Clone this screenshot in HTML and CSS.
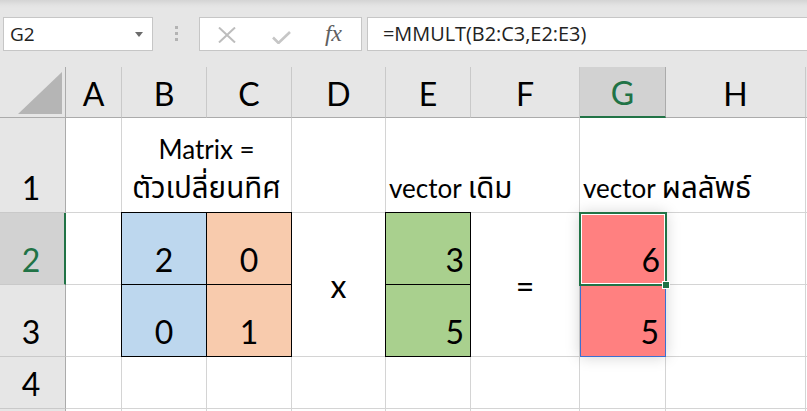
FILE: index.html
```html
<!DOCTYPE html>
<html lang="th">
<head>
<meta charset="utf-8">
<link rel="stylesheet" href="styles.css">
</head>
<body>
<div class="app">
  <div class="toolbar">
    <div class="namebox">
      <span class="name">G2</span>
      <svg class="dd" width="8" height="5" viewBox="0 0 8 5"><path d="M0 0H8L4 5Z" fill="#6b6b6b"/></svg>
    </div>
    <div class="sep"><i></i><i></i><i></i></div>
    <div class="fnbox">
      <svg class="ico-x" width="18" height="16" viewBox="0 0 18 16"><path d="M1 0.5L17 15.5M17 0.5L1 15.5" stroke="#bdbdbd" stroke-width="2" fill="none"/></svg>
      <svg class="ico-ok" width="19" height="13" viewBox="0 0 19 13"><path d="M1 6.5L6.5 12L18 1" stroke="#c6c6c6" stroke-width="2.6" fill="none"/></svg>
      <span class="fx">fx</span>
    </div>
    <div class="formula">=MMULT(B2:C3,E2:E3)</div>
  </div>

  <div class="sheet">
    <!-- header row -->
    <div class="corner"><svg width="44" height="42" viewBox="0 0 44 42"><path d="M44 0V42H0Z" fill="#b5b5b5"/></svg></div>
    <div class="ch">A</div>
    <div class="ch">B</div>
    <div class="ch">C</div>
    <div class="ch">D</div>
    <div class="ch">E</div>
    <div class="ch">F</div>
    <div class="ch ch-sel">G</div>
    <div class="ch">H</div>
    <div class="ch ch-x"></div>

    <!-- row 1 -->
    <div class="rh">1</div>
    <div class="c"></div>
    <div class="c span2 title-cell"><span class="title">Matrix =<br><span class="th">ตัวเปลี่ยนทิศ</span></span></div>
    <div class="c"></div>
    <div class="c span2 label-cell"><span>vector <span class="th">เดิม</span></span></div>
    <div class="c span2 label-cell"><span>vector <span class="th">ผลลัพธ์</span></span></div>
    <div class="c cx"></div>

    <!-- row 2 -->
    <div class="rh rh-sel">2</div>
    <div class="c"></div>
    <div class="c num center blk blue">2</div>
    <div class="c num center blk orange">0</div>
    <div class="c rspan2 op">x</div>
    <div class="c num right blk green">3</div>
    <div class="c rspan2 op">=</div>
    <div class="gblock">
      <div class="g2 num right">6<div class="sel"></div><div class="handle"></div></div>
      <div class="g3 num right">5</div>
    </div>
    <div class="c"></div>
    <div class="c cx"></div>

    <!-- row 3 -->
    <div class="rh">3</div>
    <div class="c"></div>
    <div class="c num center blk blue">0</div>
    <div class="c num center blk orange">1</div>
    <div class="c num right blk green">5</div>
    <div class="c"></div>
    <div class="c cx"></div>

    <!-- row 4 -->
    <div class="rh">4</div>
    <div class="c"></div>
    <div class="c"></div>
    <div class="c"></div>
    <div class="c"></div>
    <div class="c"></div>
    <div class="c"></div>
    <div class="c"></div>
    <div class="c"></div>
    <div class="c cx"></div>

    <!-- row 5 -->
    <div class="rh"></div>
    <div class="c"></div>
    <div class="c"></div>
    <div class="c"></div>
    <div class="c"></div>
    <div class="c"></div>
    <div class="c"></div>
    <div class="c"></div>
    <div class="c"></div>
    <div class="c cx"></div>
  </div>
</div>
</body>
</html>
```

FILE: styles.css
```css
* { box-sizing: border-box; }
html, body { margin: 0; padding: 0; }
body {
  width: 807px;
  height: 411px;
  overflow: hidden;
  background: #fff;
  font-family: "Lato", "Noto Sans Thai", "Noto Sans Thai UI", "Leelawadee UI", "Loma", "Garuda", sans-serif;
  color: #000;
}
.app { width: 807px; height: 411px; overflow: hidden; }

/* ---------- toolbar ---------- */
.toolbar {
  height: 67px;
  background: linear-gradient(#d4d4d4 0px, #e2e2e2 5px, #e6e6e6 8px, #e6e6e6 100%);
  display: flex;
  align-items: flex-start;
  padding-top: 17px;
  padding-left: 3px;
}
.namebox {
  width: 150px;
  height: 34px;
  background: #fff;
  border: 1px solid #c6c6c6;
  display: flex;
  align-items: center;
  justify-content: space-between;
  padding: 0 9px 1px 6px;
  font-family: "Open Sans", sans-serif;
  font-size: 19px;
  color: #222;
}
.dd { margin-top: 1px; }
.sep {
  width: 46px;
  height: 34px;
  display: flex;
  flex-direction: column;
  align-items: center;
  justify-content: center;
  gap: 3px;
  padding-bottom: 2px;
}
.sep i {
  display: block;
  width: 3px;
  height: 3px;
  background: #b3b3b3;
}
.fnbox {
  width: 163px;
  height: 34px;
  background: #fff;
  border: 1px solid #c6c6c6;
  display: flex;
  align-items: center;
  padding-left: 18px;
}
.ico-x { margin-top: 2px; }
.ico-ok { margin-left: 36px; margin-top: 7px; }
.fx {
  margin-left: 34px;
  font-family: "Liberation Serif", serif;
  font-style: italic;
  font-size: 24px;
  color: #606060;
  margin-top: -2px;
  letter-spacing: -0.5px;
}
.formula {
  flex: 1;
  height: 34px;
  margin-left: 5px;
  margin-right: -2px;
  background: #fff;
  border: 1px solid #c6c6c6;
  display: flex;
  align-items: center;
  padding-left: 15px;
  padding-bottom: 1px;
  font-family: "Open Sans", sans-serif;
  font-size: 19.9px;
  color: #222;
}

/* ---------- sheet ---------- */
.sheet {
  display: grid;
  grid-template-columns: 66px 56px 85px 85px 94px 85px 109px 86px 140px 1fr;
  grid-template-rows: 51px 95px 72px 72px 52px 10px;
}
.corner {
  background: #e6e6e6;
  border-right: 1px solid #ababab;
  border-bottom: 1px solid #ababab;
  display: flex;
  justify-content: flex-end;
  align-items: flex-end;
  padding: 0 3px 3px 0;
}
.ch {
  background: #e6e6e6;
  border-right: 1px solid #c9c9c9;
  border-bottom: 1px solid #ababab;
  display: flex;
  align-items: center;
  justify-content: center;
  font-size: 32px;
  line-height: 32px;
  padding-top: 3px;
}
.ch-x { border-right: none; }
.ch-sel {
  background: #d2d2d2;
  color: #217346;
  border-bottom: 2px solid #217346;
  border-right-color: #ababab;
}
.rh {
  background: #e6e6e6;
  border-right: 1px solid #ababab;
  border-bottom: 1px solid #c9c9c9;
  display: flex;
  align-items: flex-end;
  justify-content: center;
  font-size: 32px;
  line-height: 32px;
  padding-bottom: 8px;
  padding-right: 3px;
}
.rh-sel {
  background: #d2d2d2;
  color: #217346;
  border-right: 2px solid #217346;
  padding-right: 2px;
}
.c {
  border-right: 1px solid #d4d4d4;
  border-bottom: 1px solid #d4d4d4;
  display: flex;
  align-items: flex-end;
}
.cx { border-right: none; }
.span2 { grid-column: span 2; }
.rspan2 { grid-row: span 2; }

.title-cell {
  justify-content: center;
  text-align: center;
  padding-bottom: 5px;
  border-bottom-color: #000;
}
.title {
  font-size: 26px;
  line-height: 38px;
}
.th {
  font-size: 29.5px;
  line-height: 38px;
}
.label-cell {
  font-size: 26px;
  line-height: 38px;
  padding-left: 3px;
  padding-bottom: 5px;
  white-space: nowrap;
}

.num {
  font-size: 32px;
  line-height: 32px;
  padding-bottom: 8px;
}
.center { justify-content: center; }
.right { justify-content: flex-end; padding-right: 6px; }
.op {
  align-items: center;
  justify-content: center;
  font-size: 32px;
  line-height: 32px;
  padding-top: 2px;
}

.blk {
  border-right: 1px solid #000;
  border-bottom: 1px solid #000;
  box-shadow: -1px 0 0 #000, 0 -1px 0 #000, -1px -1px 0 #000;
}
.blue { background: #bdd7ee; }
.orange { background: #f8cbad; }
.green { background: #a9d08e; }

.gblock {
  grid-row: span 2;
  display: flex;
  flex-direction: column;
  position: relative;
  z-index: 1;
  box-shadow: 0 0 14px rgba(0, 0, 0, 0.18);
}
.g2, .g3 {
  flex: 1;
  display: flex;
  align-items: flex-end;
  background: #ff8080;
}
.g2 {
  position: relative;
  border-bottom: 1px solid #ff8080;
}
.g3 {
  border-left: 1px solid #3b6fd1;
  border-right: 1px solid #3b6fd1;
  border-bottom: 1px solid #3b6fd1;
}
.sel {
  position: absolute;
  left: -1px;
  top: -1px;
  right: -1px;
  bottom: -2px;
  border: 2px solid #217346;
  box-shadow: inset 0 0 0 1px #fff;
}
.handle {
  position: absolute;
  right: -4px;
  bottom: -5px;
  width: 8px;
  height: 8px;
  background: #217346;
  border: 1px solid #fff;
}
```
